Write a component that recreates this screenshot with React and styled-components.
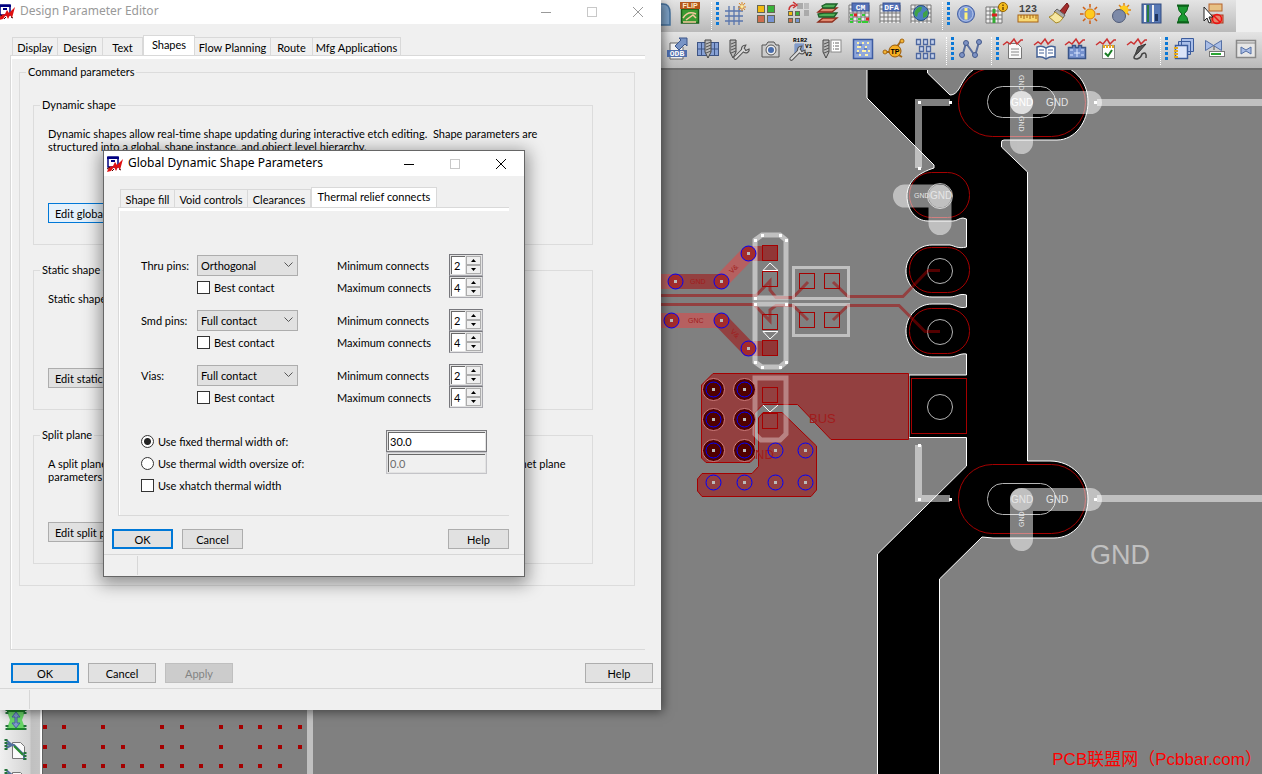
import { useState } from 'react';
import styled, { createGlobalStyle, css } from 'styled-components';

const GlobalStyle = createGlobalStyle`
  *, *::before, *::after {
    box-sizing: border-box;
  }
  body {
    margin: 0;
    overflow: hidden;
    background: #808080;
    font-family: Lato, "Liberation Sans", Arial, sans-serif;
    font-size: 11px;
    line-height: 13px;
    color: #000;
  }
  button, input, select {
    font: inherit;
    color: inherit;
    margin: 0;
  }
`

/* ---------- main application behind the dialogs ---------- */

const Desktop = styled.div`
  position: relative;
  display: flex;
  flex-direction: column;
  width: 100%;
  height: 100vh;
  overflow: hidden;
`
const Toolbars = styled.header`
  background: #efefef;
  border-bottom: 2px solid #6e6e6e;
  box-shadow: inset 0 -1px 0 #fff;
`
const ToolRow = styled.div`
  display: flex;
  align-items: flex-start;
  width: ${p => p.$short ? 'fit-content' : '100%'};
  height: ${p => p.$short ? '32px' : '36px'};
  padding: ${p => p.$short ? '2px 7px 0 643px' : '5px 0 0 661px'};
  background: linear-gradient(#e4e4e4, #cfcfcf 50%, #b9b9b9);
  overflow: hidden;
`
const ToolButton = styled.button`
  flex: none;
  display: flex;
  justify-content: center;
  width: 31px;
  height: 24px;
  padding: 0;
  border: 0;
  background: none;
  svg {
    width: 24px;
    height: 24px;
    overflow: visible;
  }
`
const Grip = styled.span`
  flex: none;
  width: 14px;
  height: 24px;
  padding-left: 6px;
  &::before {
    content: '';
    float: left;
    height: 28px;
    border-left: 1px dotted #fff;
  }
  &::after {
    content: '';
    float: right;
    width: 3px;
    height: 23px;
    background: repeating-linear-gradient(#0a78d7 0 3px, transparent 3px 5px);
  }
`
const Workspace = styled.main`
  flex: 1;
  min-height: 0;
  display: flex;
`
const SideRail = styled.nav`
  flex: none;
  display: flex;
  flex-direction: column;
  gap: 6px;
  width: 43px;
  padding-top: 638px;
  border-right: 1px solid #606060;
  background: linear-gradient(90deg, #f0f0f0, #d4d4d4 70%, #c0c0c0 75%, #c4c4c4 94%, #fff 97%);
  overflow: hidden;
`
const Board = styled.svg`
  flex: 1;
  min-width: 0;
  height: 100%;
  background: #808080;
`
const Watermark = styled.div`
  position: absolute;
  right: 0;
  bottom: 4px;
  font: 17px/20px "Liberation Sans", "Noto Sans CJK SC", sans-serif;
  color: #f00;
`

/* ---------- windows ---------- */

const Window = styled.section`
  position: absolute;
  left: ${p => p.$x}px;
  top: ${p => p.$y}px;
  width: ${p => p.$w}px;
  max-width: 100%;
  background: #f0f0f0;
  box-shadow: ${p => p.$active
    ? '0 4px 16px 3px rgba(0, 0, 0, 0.4)'
    : '2px 2px 10px rgba(0, 0, 0, 0.5)'};
  ${p => p.$active && css`
    border: 1px solid #666;
  `}
`
const TitleBar = styled.div`
  display: flex;
  align-items: center;
  height: ${p => p.$active ? '25px' : '24px'};
  padding-left: ${p => p.$active ? '3px' : '0'};
  background: #fff;
  color: ${p => p.$active ? '#000' : '#999'};
`
const AppIcon = styled.svg`
  flex: none;
  width: 16px;
  height: 16px;
  margin-left: ${p => p.$cut ? '-1px' : '0'};
`
const Title = styled.h1`
  flex: 1;
  margin: 0 0 0 5px;
  padding-bottom: 2px;
  font: 400 12px/20px "Noto Sans", "Noto Sans CJK SC", sans-serif;
`
const CaptionButton = styled.button`
  display: flex;
  align-items: center;
  justify-content: center;
  width: 46px;
  height: 22px;
  padding: 0;
  border: 0;
  background: none;
  color: ${p => p.$dim ? '#c8c8c8' : 'inherit'};
  svg {
    width: 12px;
    height: 12px;
    fill: none;
    stroke: currentColor;
    shape-rendering: ${p => p.$crisp ? 'crispEdges' : 'auto'};
  }
`
const TabStrip = styled.div`
  display: flex;
  align-items: flex-end;
  height: 20px;
  margin: ${p => p.$margin};
`
const Tab = styled.button`
  height: 18px;
  width: ${p => p.$w}px;
  padding: 2px 0 0;
  border: 1px solid #d9d9d9;
  border-width: 1px 1px 0 0;
  background: #f0f0f0;
  white-space: nowrap;
  &:first-child {
    border-left-width: 1px;
  }
  ${p => p.$on && css`
    height: 20px;
    padding: 0 0 2px;
    border-left-width: 1px;
    background: #fff;
  `}
`
const Page = styled.div`
  margin: ${p => p.$margin};
  padding: ${p => p.$padding};
  border: 1px solid #d9d9d9;
  border-right: 0;
  box-shadow: inset 1px 3px 0 #fff;
`
const ButtonRow = styled.div`
  display: flex;
  gap: 9px;
  padding: ${p => p.$padding};
  & > :last-child {
    margin-left: auto;
  }
`
const PushButton = styled.button`
  width: ${p => p.$w}px;
  height: 20px;
  padding: 0;
  border: 1px solid #adadad;
  background: #e1e1e1;
  white-space: nowrap;
  ${p => p.$default && css`
    border: 2px solid #0078d7;
  `}
  ${p => p.$hot && css`
    border-color: #0078d7;
    background: #e5f1fb;
  `}
  &:disabled {
    border-color: #bfbfbf;
    background: #ccc;
    color: #838383;
  }
`
const EditButton = styled(PushButton)`
  width: auto;
  padding: 0 6px;
`
const StatusBar = styled.div`
  display: flex;
  height: 22px;
  padding: 1px 0;
  border-top: 1px solid #d7d7d7;
  &::before {
    content: '';
    width: ${p => p.$cell}px;
    border-right: 1px solid #d7d7d7;
  }
`

/* ---------- parameter editor ---------- */

const Group = styled.fieldset`
  height: ${p => p.$h}px;
  min-width: 0;
  margin: 0 0 ${p => p.$gap || 0}px;
  padding: ${p => p.$padding};
  border: 1px solid #dcdcdc;
  legend {
    height: 14px;
    padding: 0 2px;
    margin-left: ${p => p.$legend || 0}px;
  }
`
const GroupBody = styled.div`
  display: flex;
  flex-direction: column;
  justify-content: space-between;
  align-items: flex-start;
  height: 100%;
  p {
    margin: 0;
    white-space: pre;
  }
`

/* ---------- thermal relief page ---------- */

const PinRows = styled.div`
  display: flex;
  flex-direction: column;
  gap: 11px;
`
const PinRow = styled.div`
  display: grid;
  grid-template-columns: 56px 140px 112px 34px;
  grid-template-rows: 22px 22px;
  align-items: center;
`
const Select = styled.select`
  width: 101px;
  height: 21px;
  padding: 0 3px;
  border: 1px solid #adadad;
  border-radius: 0;
  appearance: none;
  background: #e1e1e1 url("data:image/svg+xml,%3Csvg xmlns='http://www.w3.org/2000/svg' width='9' height='6'%3E%3Cpath d='M.5 .5l4 4 4-4' fill='none' stroke='%23555'/%3E%3C/svg%3E") no-repeat right 4px center;
`
const Check = styled.label`
  display: flex;
  align-items: center;
  gap: 4px;
`
const Tick = styled.input`
  width: 13px;
  height: 13px;
  border: 1px solid #333;
  border-radius: ${p => p.type === 'radio' ? '50%' : '0'};
  background: #fff;
  appearance: none;
  &:checked {
    background: radial-gradient(circle, #222 0 3px, #fff 4px);
  }
`
const Spin = styled.div`
  display: flex;
  width: 34px;
  height: 22px;
  padding: 1px;
  border: 1px solid #aaaab0;
  border-left-color: #77777c;
  border-top-color: #77777c;
  background: #e3e3e3;
`
const SpinInput = styled.input`
  width: 14px;
  min-width: 0;
  padding: 0 0 0 2px;
  border: 1px solid #696969;
  border-width: 1px 0 0 1px;
  background: #fff;
  appearance: textfield;
  &::-webkit-inner-spin-button {
    appearance: none;
    display: none;
  }
`
const SpinArrows = styled.div`
  flex: 1;
  display: flex;
  flex-direction: column;
  padding-left: 1px;
  button {
    flex: 1;
    display: flex;
    align-items: center;
    justify-content: center;
    min-height: 0;
    padding: 0;
    border: 1px solid #adadad;
    background: #f0f0f0;
  }
  svg {
    width: 5px;
    height: 3px;
  }
`
const WidthRows = styled.div`
  display: grid;
  grid-template-columns: 245px 101px;
  grid-auto-rows: 22px;
  align-items: center;
  margin-top: 22px;
`
const WidthInput = styled.input`
  width: 101px;
  height: 22px;
  padding: 0 3px;
  border: 1px solid #7a7a7e;
  background: #fff;
  box-shadow: inset 0 0 0 1px #e3e3e3, inset 2px 2px 0 #696969;
  &:disabled {
    border-color: #c4c4c8;
    background: #f0f0f0;
    color: #6d6d6d;
  }
`

/* ---------- toolbar drawings ---------- */

const grid = (x, y, w, h, s) => {
  let d = '';
  for (let i = 0; i <= w; i += s) d += `M${x + i} ${y}v${h}`;
  for (let i = 0; i <= h; i += s) d += `M${x} ${y + i}h${w}`;
  return d;
}

const Tile = ({ x, y, s = 7, c }) => (
  <rect x={x + 0.5} y={y + 0.5} width={s} height={s} fill={c} stroke="#665" />
)
const Table = ({ x = 2, y = 3, w = 20, h = 18 }) => (
  <>
    <rect x={x} y={y} width={w} height={h} fill="#eee" />
    <path d={grid(x, y, w, h, 4)} stroke="#777" fill="none" />
  </>
)
const Banner = ({ text }) => (
  <>
    <Table />
    <rect x="5" y="1" width="17" height="8" fill="#5572b8" stroke="#3a5494" />
    <text x="13.5" y="8" fontSize="8" fontWeight="700" textAnchor="middle" fill="#fff" fontFamily="Liberation Mono">{text}</text>
  </>
)
const Wave = () => (
  <path d="M0 8l4-3 3 2 4-5 3 5 4-4 2 0" fill="none" stroke="#c33" strokeWidth="1.5" />
)
const Wrench = () => (
  <>
    <path d="M3 21l9-9" stroke="#555" strokeWidth="5" strokeLinecap="round" />
    <path d="M12 13c-3-3-1-8 4-8l-2 4 2 3 4-2c1 4-4 7-8 3z" fill="#ddd" stroke="#555" strokeWidth="1.500" />
    <path d="M3 21l10-10" stroke="#ddd" strokeWidth="2.500" strokeLinecap="round" />
  </>
)
const Drill = ({ x }) => (
  <g transform={`translate(${x} 0)`}>
    <path d="M0 3h6v12l-3 6-3-6z" fill="#bbb" stroke="#444" />
    <path d="M1 7l5-2M1 10l5-2M1 13l5-2M1 16l5-2" stroke="#555" />
  </g>
)

const icons = {
  next: <path d="M1 2h15q7 0 7 9v12H0z" fill="#7ea3c8" stroke="#46719c" strokeWidth="1.5" />,
  flip: (
    <>
      <rect x="3.5" y="7" width="17" height="14" fill="#3b9a32" stroke="#185f19" strokeWidth="1.5" />
      <path d="M5 16q5-8 13-4M8 18l7-5 3 3M5 20h13" fill="none" stroke="#f7c9a0" strokeWidth="1.5" />
      <rect x="2" y="0" width="20" height="7" fill="#b4561c" />
      <text x="12" y="6" fontSize="7" fontWeight="700" textAnchor="middle" fill="#ffe9c4" fontFamily="Liberation Sans">FLIP</text>
    </>
  ),
  grid: (
    <>
      <path d="M6 4v19M11 4v19M16 4v19M2 9h18M2 14h18M2 19h18" stroke="#5976ad" strokeWidth="1.3" />
      <path d="M19 0v9M15 5h8M16 1l6 7M22 1l-6 7" stroke="#d98320" />
      <circle cx="19" cy="4.500" r="1.500" fill="#fff2a0" />
    </>
  ),
  tiles: (
    <>
      <Tile x={3} y={3} c="#f3ba10" /><Tile x={13} y={3} c="#39b33a" />
      <Tile x={3} y={13} c="#cd6c4d" /><Tile x={13} y={13} c="#7693d2" />
    </>
  ),
  tilesMove: (
    <>
      <rect x="12" y="1" width="6" height="6" fill="#aaa" /><rect x="19" y="1" width="5" height="6" fill="#bbb" />
      <rect x="19" y="8" width="5" height="6" fill="#aaa" />
      <path d="M4 8q0-5 6-5M8 0l4 3-4 3" fill="none" stroke="#c33" strokeWidth="1.500" />
      <Tile x={3} y={9} s={4} c="#f3ba10" /><Tile x={10} y={9} s={4} c="#39b33a" />
      <Tile x={3} y={16} s={4} c="#cd6c4d" /><Tile x={10} y={16} s={4} c="#7693d2" />
    </>
  ),
  layers: (
    <>
      <path d="M2 20l5-4h14l-5 4z" fill="#e08a70" stroke="#8e2d1c" strokeWidth="1.300" />
      <path d="M3 15l-1-3 6-1h13l-3 4z" fill="#4fae56" stroke="#1c5e28" strokeWidth="1.300" />
      <path d="M2 10l5-4h14l-5 4z" fill="#e08a70" stroke="#8e2d1c" strokeWidth="1.300" />
      <path d="M7 6L6 4l4-2h11l-3 4z" fill="#4fae56" stroke="#1c5e28" strokeWidth="1.300" />
    </>
  ),
  cm: (
    <>
      <Banner text="CM" />
      <path d="M3 13h3M15 13h3M3 17h3M11 17h3M3 20h3M11 20h3M15 20h6" stroke="#3c3" strokeWidth="2" />
      <path d="M7 13h3M19 17h3" stroke="#d22" strokeWidth="3" />
    </>
  ),
  dfa: <Banner text="DFA" />,
  globe: (
    <>
      <Table />
      <circle cx="12" cy="11" r="7.500" fill="#4b7fc0" stroke="#27507f" />
      <path d="M6 9q3-5 7-4l-1 4-3 2-1 4q-4-2-2-6M14 11l4-3q2 4-1 7l-3 1z" fill="#3fa347" />
    </>
  ),
  info: (
    <>
      <circle cx="12" cy="12" r="8.500" fill="#7390cf" stroke="#4661a3" />
      <circle cx="12" cy="12" r="7" fill="none" stroke="#b5c6ea" />
      <path d="M12 6v3M12 10.500v7" stroke="#fff27a" strokeWidth="3" />
    </>
  ),
  tableInfo: (
    <>
      <Table x={1} y={5} w={16} h={16} />
      <path d="M9 7v14" stroke="#3a3" strokeWidth="3" /><path d="M7 13h5" stroke="#d22" strokeWidth="3" />
      <circle cx="18" cy="5" r="4.500" fill="#f5bd1c" stroke="#936200" />
      <path d="M18 2.500v1.500M18 5v3" stroke="#704800" strokeWidth="1.500" />
    </>
  ),
  ruler: (
    <>
      <text x="12" y="10" fontSize="10" fontWeight="700" textAnchor="middle" fill="#444" fontFamily="Liberation Mono">123</text>
      <rect x="2" y="13" width="20" height="7" fill="#f7d873" stroke="#a86314" />
      <path d="M5 13v3M8 13v4M11 13v3M14 13v4M17 13v3M20 13v4" stroke="#a86314" />
    </>
  ),
  brush: (
    <>
      <path d="M13 9l7-8 2 3-5 9z" fill="#a32c2c" stroke="#6e1717" />
      <path d="M10 7l8 6-2 3-9-6z" fill="#aaa" stroke="#666" />
      <path d="M8 10l8 6q-3 5-7 5l-7-6q4-1 6-5z" fill="#f6e7a0" stroke="#a68928" />
    </>
  ),
  sun: (
    <>
      <path d="M12 2v20M2 12h20M5 5l14 14M19 5L5 19" stroke="#cf5f14" strokeWidth="1.500" />
      <circle cx="12" cy="12" r="6.500" fill="#d0d0d0" />
      <circle cx="12" cy="12" r="5" fill="#ffcb1e" stroke="#d97b0c" />
    </>
  ),
  eclipse: (
    <>
      <path d="M15 1v14M7 8h15M10 3l10 10M20 3L10 13" stroke="#dc8216" strokeWidth="1.500" />
      <circle cx="15" cy="8" r="4.500" fill="#ffcb1e" />
      <circle cx="10" cy="14" r="6.500" fill="#7d8aa8" stroke="#505b78" />
    </>
  ),
  stripes: (
    <>
      <rect x="2" y="2" width="19" height="19" fill="#5879b5" stroke="#334d80" />
      <path d="M5 3v17M13 3v17" stroke="#eee" strokeWidth="2" />
      <path d="M8 3v17" stroke="#287b3e" strokeWidth="2" /><path d="M15 12h3v7h-3z" fill="#1f3560" />
    </>
  ),
  hourglass: (
    <>
      <path d="M7 4q0 5 4 8-4 3-4 8h10q0-5-4-8 4-3 4-8z" fill="#1c9a33" stroke="#0b6119" />
      <path d="M6 3.500h12M6 20.500h12" stroke="#0b6119" strokeWidth="2" />
    </>
  ),
  cursorOff: (
    <>
      <rect x="7" y="2" width="13" height="7" fill="#e7c184" stroke="#b5632c" />
      <rect x="9" y="13" width="12" height="8" fill="#e9836c" stroke="#a83a20" />
      <circle cx="15" cy="17" r="4.500" fill="none" stroke="#e11" strokeWidth="1.500" /><path d="M12 14l6 6" stroke="#e11" strokeWidth="1.500" />
      <path d="M2 5v14l3-3 2 5 2-1-2-5h4z" fill="#fff" stroke="#222" />
    </>
  ),
  odb: (
    <>
      <path d="M5 6h9l4 4v12H5z" fill="#f2f2f2" stroke="#666" />
      <path d="M10 9l6-6-2-2h8v8l-2-2-6 6z" fill="#7894c6" stroke="#3a5589" />
      <rect x="2" y="13" width="20" height="7" fill="#4f6fae" />
      <text x="12" y="19" fontSize="8" fontWeight="700" textAnchor="middle" fill="#fff" fontFamily="Liberation Mono">ODB</text>
    </>
  ),
  board: (
    <>
      <rect x="1.500" y="5.500" width="21" height="13" fill="#86a0d4" stroke="#3d5484" />
      <path d="M5.500 5v14M18.500 5v14M1 12h22" stroke="#3d5484" />
      <Drill x={9} />
    </>
  ),
  drillWrench: (
    <>
      <Drill x={3} />
      <g transform="translate(6 4) scale(0.8)"><Wrench /></g>
    </>
  ),
  camera: (
    <>
      <path d="M4 8h4l2-3h6l2 3h3v12H4z" fill="#ccc" stroke="#555" />
      <circle cx="13" cy="13" r="5" fill="#eee" stroke="#555" /><circle cx="13" cy="13" r="3" fill="#496dac" />
    </>
  ),
  rename: (
    <>
      <path d={grid(6, 7, 9, 9, 2)} stroke="#6688c5" />
      <g transform="translate(0 5) scale(0.8)"><Wrench /></g>
      <g fontSize="6" fontWeight="700" fontFamily="Liberation Mono">
        <text x="4" y="5">R1R2</text>
        <text x="16" y="11">V1</text>
        <text x="16" y="19">V2</text>
      </g>
    </>
  ),
  legend: (
    <>
      <Drill x={3} />
      <rect x="11" y="3" width="10" height="12" fill="#fff" stroke="#888" />
      <path d="M13 6h1M15 6h4M13 9h1M15 9h4M13 12h1M15 12h4" stroke="#666" />
    </>
  ),
  matrix: (
    <>
      <rect x="2.500" y="2.500" width="19" height="19" fill="#90a8dc" stroke="#3d5ba1" strokeWidth="1.500" />
      <path d="M6 6h2M11 6h2M16 6h2M6 10h4M14 10h2M6 14h2M11 14h4M17 14h2M8 18h2M14 18h3" stroke="#fff2a8" strokeWidth="2" />
      <path d="M8 8h3M13 12h3M5 16h3" stroke="#3d5ba1" />
    </>
  ),
  testPoint: (
    <>
      <path d="M2 15h8M14 11l5-7M15 17l5 3" stroke="#a56713" strokeWidth="2" />
      <circle cx="3" cy="15" r="2" fill="#f3b434" stroke="#a56713" /><circle cx="20" cy="4" r="2" fill="#f3b434" stroke="#a56713" />
      <circle cx="13" cy="14" r="6" fill="#f6ae22" stroke="#96590b" />
      <text x="13" y="17" fontSize="7" fontWeight="700" textAnchor="middle" fontFamily="Liberation Sans">TP</text>
    </>
  ),
  pads: (
    <g fill="#c6d2ec" stroke="#4d679f" strokeWidth="1.300">
      <path d="M3.500 2.500h4v5h-4zM10.500 2.500h4v5h-4zM17.500 2.500h4v5h-4zM6.500 9.500h4v5h-4zM13.500 9.500h4v5h-4zM3.500 16.500h4v5h-4zM10.500 16.500h4v5h-4zM17.500 16.500h4v5h-4z" />
    </g>
  ),
  net: (
    <>
      <path d="M4 20l4-14 9 13 4-14" fill="none" stroke="#5a6f9e" strokeWidth="2" />
      <g fill="#7c92c4" stroke="#465b8b">
        <circle cx="4" cy="18" r="2.500" /><circle cx="8" cy="6" r="2.500" /><circle cx="17" cy="18" r="2.500" /><circle cx="21" cy="5" r="2.500" />
      </g>
    </>
  ),
  waveDoc: (
    <>
      <path d="M5.500 6.500h9l4 4v11h-13z" fill="#fafafa" stroke="#777" />
      <path d="M8 12h8M8 15h8M8 18h8" stroke="#888" /><Wave />
    </>
  ),
  waveBook: (
    <>
      <path d="M3 10q5-2 9 1 4-3 9-1v10q-5-1-9 2-4-3-9-2z" fill="#fff" stroke="#446296" strokeWidth="1.500" />
      <path d="M12 11v10M5 13h5M5 16h5M14 13h5M14 16h5" stroke="#446296" /><Wave />
    </>
  ),
  waveBox: (
    <>
      <path d="M3.500 10.500h4v-2h3v2h3v-2h3v2h4v11h-17z" fill="#7793cf" stroke="#395488" strokeWidth="1.500" />
      <path d="M5 13h3M16 13h3M5 18h3M16 18h3M12 12v8M9 16h6" stroke="#dbe6ff" /><Wave />
    </>
  ),
  waveCheck: (
    <>
      <rect x="6.500" y="8.500" width="12" height="13" fill="#fff" stroke="#888" />
      <path d="M7 9.500h12" stroke="#e8aa20" strokeWidth="3" strokeDasharray="2 1" />
      <path d="M9 16l3 3 4-6" fill="none" stroke="#177c22" strokeWidth="2" /><Wave />
    </>
  ),
  wavePlug: (
    <>
      <path d="M19 7l-8 9-3 2 3-8z" fill="#555" stroke="#333" />
      <path d="M10 16q-6 6 0 6 4-1 5-5 5-3 4 4" fill="none" stroke="#444" strokeWidth="1.500" /><Wave />
    </>
  ),
  books: (
    <>
      <path d="M9.500 1.500h12v13h-12zM6.500 4.500h12v13h-12z" fill="#a9bee8" stroke="#3c5c9d" />
      <path d="M3.500 8.500h12v13h-12z" fill="#dbe4f8" stroke="#3c5c9d" strokeWidth="1.500" />
      <path d="M2 11h4M2 14h4M2 17h4M2 20h4" stroke="#e5aa1d" strokeWidth="2" />
    </>
  ),
  gate: (
    <>
      <path d="M2.500 3.500l8 5 8-5v10l-8-5-8 5z" fill="#a9bde6" stroke="#5570a5" />
      <path d="M11 9v4" stroke="#555" /><rect x="6.500" y="14.500" width="15" height="5" fill="#fff" stroke="#777" />
      <path d="M8 17h10" stroke="#29a332" strokeWidth="2" />
    </>
  ),
  gateWindow: (
    <>
      <rect x="2.500" y="3.500" width="19" height="17" fill="#e6e6e6" stroke="#888" strokeWidth="1.500" /><path d="M3 6h18" stroke="#888" />
      <path d="M7 10l5 3 5-3v7l-5-3-5 3z" fill="#a9bde6" stroke="#5570a5" />
    </>
  ),
  stretch: (
    <>
      <path d="M3 4h18l-3 8 3 8H3l3-8z" fill="#68d566" />
      <path d="M3 3h18M3 21h18" stroke="#1d8527" strokeWidth="2" />
      <path d="M3 1v6M21 1v6M3 17v6M21 17v6" stroke="#24743a" strokeWidth="3" strokeDasharray="2 1" />
      <path d="M12 4l4 5h-3v6h3l-4 5-4-5h3V9H8z" fill="#7e97cb" stroke="#44639d" />
    </>
  ),
  route: (
    <>
      <path d="M8.500 4.500h8l4 4v12h-12z" fill="#fafafa" stroke="#777" />
      <path d="M2 6l8 1 10 10v5M2 10l6-3M2 2l6 5" fill="none" stroke="#53719f" strokeWidth="2" />
      <path d="M10 8l9 9" stroke="#268a2e" strokeWidth="2" />
      <path d="M2 1v11M21 14v9" stroke="#24743a" strokeWidth="3" strokeDasharray="2 1" />
    </>
  ),
}

const Tool = ({ name }) => (
  <ToolButton type="button" aria-label={name}>
    <svg viewBox="0 0 24 24">{icons[name]}</svg>
  </ToolButton>
)

const topGroups = [
  ['next', 'flip'],
  ['grid', 'tiles', 'tilesMove', 'layers', 'cm', 'dfa', 'globe'],
  ['info', 'tableInfo', 'ruler', 'brush', 'sun', 'eclipse', 'stripes', 'hourglass', 'cursorOff'],
]
const lowerGroups = [
  ['odb', 'board', 'drillWrench', 'camera', 'rename', 'legend', 'matrix', 'testPoint', 'pads'],
  ['net'],
  ['waveDoc', 'waveBook', 'waveBox', 'waveCheck', 'wavePlug'],
  ['books', 'gate', 'gateWindow'],
]

const ToolGroups = ({ groups }) => groups.flatMap((names, i) => [
  i > 0 && <Grip key={`grip${i}`} />,
  ...names.map(name => <Tool key={name} name={name} />),
])

/* ---------- board artwork ---------- */

const dots = [
  [725, [43, 62, 101, 160, 180, 219, 239, 258, 278, 298]],
  [745, [43, 62, 101, 121, 160, 180, 219, 258, 278, 298]],
  [764, [43, 62, 82, 101, 121, 140, 160, 180, 199, 219, 239, 258, 278]],
]
const smallVias = [[775, 450], [805, 450], [713, 482], [744, 482], [775, 482], [805, 482]]
const trackVias = [[675, 281], [721, 281], [748, 253], [671, 320], [721, 320], [748, 348]]
const bigVias = [[713, 389], [744, 389], [713, 419], [744, 419], [713, 450], [744, 450]]
const smdPads = [[762, 245], [762, 271], [762, 314], [762, 340], [799, 273], [824, 273], [799, 312], [824, 312], [762, 387], [762, 413]]
const silkDots = [
  [762, 235], [780, 235], [755, 240], [786, 240], [755, 298], [786, 304], [755, 304], [755, 362], [786, 362], [762, 367], [780, 367],
  [919, 102], [950, 102], [919, 168], [1095, 102], [919, 445], [919, 499], [950, 499], [1095, 499],
]

const Via = ({ x, y, fill }) => (
  <g>
    <circle cx={x + 0.5} cy={y + 0.5} r="7.500" fill={fill || 'none'} stroke="#00f" />
    <rect x={x - 1} y={y - 1} width="3" height="3" fill="#bbb" />
  </g>
)

const BoardArt = () => (
  <Board aria-label="Board layout">
    <g transform="translate(-43 -70)" fontFamily="Liberation Sans">
      <g fill="#a50000">
        {dots.map(([y, xs]) => xs.map(x => <rect key={`${x}-${y}`} x={x} y={y} width="4" height="4" />))}
      </g>
      <rect x="307" y="70" width="6" height="1200" fill="#c0c0c0" />

      <path
        d="M867 60V98L934 165V168C918 173 907 182 907 196C907 210 916 221 928 221H953C957 221 959 218 963 218L966.500 219V247C958 249 955 246 950 245H932C918 245 906 257 906 271S918 297 932 297H950C956 297 960 293 966.500 295V307C960 309 956 305 950 304H932C918 304 906 316 906 331S918 357 932 357H950C956 357 960 353 966.500 354V375H909V437.500H966.500V466L877.500 554V1300H939.500V579L982 537L993 538H1054C1074 538 1088 520 1088 499S1072 461 1050 461H1027.500V172L1001.500 147V143Q1001 140 1004 140H1057C1075 140 1088 122 1088 102C1088 84 1078 72 1064 66V60H980V66C960 74 962 95 950 95L927.500 73V60Z"
        stroke="#fff"
      />

      <g fill="none" stroke="#a50000">
        <rect x="958.500" y="68.500" width="127" height="68" rx="34" />
        <rect x="909.500" y="172.500" width="60" height="45" rx="22" />
        <rect x="909.500" y="247.500" width="60" height="45" rx="22" />
        <rect x="909.500" y="308.500" width="60" height="45" rx="22" />
        <rect x="958.500" y="464.500" width="127" height="69" rx="34" />
        <rect x="911.500" y="378.500" width="55" height="55" />
      </g>
      <g fill="none" stroke="#b5b5b5">
        <rect x="987.500" y="86.500" width="68" height="31" rx="15" />
        <rect x="987.500" y="483.500" width="68" height="31" rx="15" />
        <circle cx="940" cy="196" r="12.500" />
        <circle cx="940" cy="271" r="12.500" />
        <circle cx="940" cy="332" r="12.500" />
        <circle cx="940" cy="407" r="12.500" />
      </g>

      {/* clines */}
      <g fill="none" stroke="#b66060" strokeWidth="15">
        <path d="M650 281.500H675" />
        <path d="M721 281.500L748 253.500" />
        <path d="M650 320.500H721" />
      </g>
      <g fill="none" stroke="#a50000" strokeOpacity="0.5">
        <g strokeWidth="15">
          <path d="M675 281.500H721" />
          <path d="M748 253.500H778" />
          <path d="M721 320.500L748 348.500H778" />
        </g>
        <g strokeWidth="3">
          <path d="M650 295.500H756L770 281V290L776 297.500H793L808 282" />
          <path d="M833 282L848 296.500H903L928 270.500H940" />
          <path d="M650 304.500H754L770 321V310L776 305.500H793L808 320" />
          <path d="M833 320L848 305.500H899L925 331.500H940" />
        </g>
      </g>

      {/* shapes */}
      <g fill="#a50000" fillOpacity="0.5" stroke="#a50000">
        <path d="M713 373.500H908.500V439.500H831L797.500 404.500H763L754.500 413V458L750 462.500H706L701.500 458V385Z" />
        <path d="M763 412.500H782L816.500 446V490L811 496.500H702L697.500 491V479L702 473.500H752L758.500 466.500V418Z" />
      </g>
      <g fill="#a01c1c" fontSize="13">
        <text x="809" y="423">BUS</text>
        <text x="755" y="459">ND</text>
      </g>
      <g fill="#a01c1c" fontSize="7">
        <text x="690" y="284">GND</text>
        <text x="688" y="323">GNC</text>
        <text transform="translate(732 274) rotate(-45)">V&amp;</text>
        <text transform="translate(730 332) rotate(45)">V&amp;</text>
      </g>

      {/* silkscreen */}
      <g fill="none" stroke="#fff" strokeOpacity="0.5">
        <g strokeWidth="5">
          <path d="M755 240L762 235H780L786 240V298H755Z" />
          <path d="M755 304H786V362L780 367H762L755 362Z" />
        </g>
        <path d="M755 378H786V434L780 440H761L755 434Z" strokeWidth="5" strokeOpacity="0.350" />
        <g strokeWidth="3">
          <path d="M793.500 267.500H848.500V298.500H793.500Z" />
          <path d="M793.500 304.500H848.500V335.500H793.500Z" />
        </g>
        <g strokeWidth="7">
          <path d="M918.500 168V102.500H950" />
          <path d="M918.500 445V498.500H950" />
          <path d="M1097 102.500H3000" />
          <path d="M1097 498.500H3000" />
        </g>
      </g>
      {smdPads.map(([x, y]) => (
        <rect key={`${x}-${y}`} x={x + 0.5} y={y + 0.5} width="15" height="15" fill="#902020" fillOpacity={y === 245 || y === 340 ? 0.3 : 0} stroke="#a50000" />
      ))}
      <path d="M763 270.500L770 263L778 270.500ZM763 331.500H778L770 339ZM763 405L770 412L778 405" fill="none" stroke="#fff" />

      <g fill="none" stroke="#fff" strokeWidth="23" strokeLinecap="round" opacity="0.5">
        <path d="M1021.500 50V142.500M1021.500 102.500H1090.500" />
        <path d="M1021.500 500V539.500M1021.500 499.500H1090.500" />
        <path d="M904.500 196H940V223.500" strokeLinejoin="round" />
      </g>
      <g fill="#fff" fillOpacity="0.5">
        <circle cx="1021.500" cy="102.500" r="11.500" fillOpacity="0.750" />
        <circle cx="1021.500" cy="499.500" r="11.500" />
        <circle cx="940" cy="196" r="11.500" />
      </g>
      <g fill="#e6e6e6" fontSize="10">
        <text x="1011" y="106" fill="#fff">GND</text>
        <text x="1046" y="106">GND</text>
        <text x="1011" y="503">GND</text>
        <text x="1046" y="503">GND</text>
        <text x="930" y="199">GND</text>
      </g>
      <g fill="#e6e6e6" fontSize="7">
        <text transform="translate(1019 75) rotate(90)">GND</text>
        <text transform="translate(1019 116) rotate(90)">GND</text>
        <text transform="translate(1024 527) rotate(-90)">GND</text>
        <text x="914" y="198">GND</text>
      </g>
      <text x="1090" y="564" fontSize="27" fill="#c0c0c0">GND</text>

      {bigVias.map(([x, y]) => (
        <g key={`${x}-${y}`}>
          <circle cx={x + 0.5} cy={y + 0.5} r="11" fill="#500000" stroke="#d08080" />
          <Via x={x} y={y} />
        </g>
      ))}
      {smallVias.map(([x, y]) => <Via key={`${x}-${y}`} x={x} y={y} />)}
      {trackVias.map(([x, y]) => <Via key={`${x}-${y}`} x={x} y={y} fill="#a32c2c" />)}
      {silkDots.map(([x, y]) => <rect key={`${x}-${y}`} x={x - 1} y={y - 1} width="3" height="3" fill="#fff" />)}
    </g>
  </Board>
)

/* ---------- shared window parts ---------- */

const Caption = ({ title, active }) => (
  <TitleBar $active={active}>
    <AppIcon viewBox="0 0 16 16" $cut={!active} aria-hidden="true">
      <path d="M1 1h10v10H1z" fill="#fff" stroke="#000080" strokeWidth="1.500" />
      <path d="M0 2h12M4 5h4" stroke="#000080" strokeWidth="2" />
      <path d="M16 3l-3 11-2-3-2 4-2-4-3 4-4 1 2-5 4-1 2-4 2 3 3-3z" fill="#e01010" />
      <path d="M0 13l3-2M5 15l2-2M12 13l2 1" stroke="#400" />
    </AppIcon>
    <Title>{title}</Title>
    <CaptionButton type="button" aria-label="Minimize" $crisp>
      <svg viewBox="0 0 12 12"><path d="M1 6.500h10" /></svg>
    </CaptionButton>
    <CaptionButton type="button" aria-label="Maximize" $dim $crisp>
      <svg viewBox="0 0 12 12"><path d="M1.500 1.500h9v9h-9z" /></svg>
    </CaptionButton>
    <CaptionButton type="button" aria-label="Close">
      <svg viewBox="0 0 12 12"><path d="M1 1l10 10M11 1L1 11" /></svg>
    </CaptionButton>
  </TitleBar>
)

const Tabs = ({ items, selected, margin }) => (
  <TabStrip role="tablist" $margin={margin}>
    {items.map(([label, w]) => (
      <Tab key={label} type="button" role="tab" aria-selected={label === selected} $on={label === selected} $w={w}>
        {label}
      </Tab>
    ))}
  </TabStrip>
)

const editorTabs = [
  ['Display', 46], ['Design', 45], ['Text', 40], ['Shapes', 52],
  ['Flow Planning', 76], ['Route', 42], ['Mfg Applications', 88],
]

const ParameterEditor = () => (
  <Window $x={0} $y={0} $w={661} aria-label="Design Parameter Editor">
    <Caption title="Design Parameter Editor" />
    <Tabs items={editorTabs} selected="Shapes" margin="11px 12px 0" />
    <Page $margin="0 16px 0 10px" $padding="9px 10px 63px 8px">
      <Group $h={521} $legend={-7} $padding="19px 41px 0 13px">
        <legend>Command parameters</legend>
        <Group $h={147} $gap={18} $legend={-8} $padding="15px 13px 21px 14px">
          <legend>Dynamic shape</legend>
          <GroupBody>
            <p>
              {'Dynamic shapes allow real-time shape updating during interactive etch editing.  Shape parameters are\n'}
              {'structured into a global, shape instance, and object level hierarchy.'}
            </p>
            <EditButton type="button" $hot>Edit global dynamic shape parameters</EditButton>
          </GroupBody>
        </Group>
        <Group $h={147} $gap={18} $legend={-8} $padding="15px 13px 21px 14px">
          <legend>Static shape</legend>
          <GroupBody>
            <p>Static shapes</p>
            <EditButton type="button">Edit static shape parameters</EditButton>
          </GroupBody>
        </Group>
        <Group $h={136} $legend={-8} $padding="15px 13px 21px 14px">
          <legend>Split plane</legend>
          <GroupBody>
            <p>
              {'A split plane divides a layer into areas of solid copper, with anti etch lines between each and every net plane\n'}
              {'parameters control the fill.'}
            </p>
            <EditButton type="button">Edit split plane parameters</EditButton>
          </GroupBody>
        </Group>
      </Group>
    </Page>
    <ButtonRow $padding="13px 8px 5px 11px">
      <PushButton type="button" $w={68} $default>OK</PushButton>
      <PushButton type="button" $w={68}>Cancel</PushButton>
      <PushButton type="button" $w={68} disabled>Apply</PushButton>
      <PushButton type="button" $w={68}>Help</PushButton>
    </ButtonRow>
    <StatusBar $cell={30} />
  </Window>
)

const Spinner = ({ label, initial }) => {
  const [value, setValue] = useState(initial);
  return (
    <Spin>
      <SpinInput type="number" aria-label={label} value={value} onChange={e => setValue(Number(e.target.value))} />
      <SpinArrows>
        <button type="button" aria-label="Increase" onClick={() => setValue(value + 1)}>
          <svg viewBox="0 0 5 3"><path d="M0 3l2.500-3L5 3z" /></svg>
        </button>
        <button type="button" aria-label="Decrease" onClick={() => setValue(value - 1)}>
          <svg viewBox="0 0 5 3"><path d="M0 0l2.500 3L5 0z" /></svg>
        </button>
      </SpinArrows>
    </Spin>
  )
}

const pinTypes = [
  ['Thru pins:', 'Orthogonal'],
  ['Smd pins:', 'Full contact'],
  ['Vias:', 'Full contact'],
]

const shapeTabs = [
  ['Shape fill', 55], ['Void controls', 73], ['Clearances', 63], ['Thermal relief connects', 126],
]

const ShapeParameters = () => {
  const [mode, setMode] = useState('fixed');
  return (
    <Window $x={103} $y={150} $w={422} $active aria-label="Global Dynamic Shape Parameters">
      <Caption title="Global Dynamic Shape Parameters" active />
      <Tabs items={shapeTabs} selected="Thermal relief connects" margin="11px 16px 0" />
      <Page $margin="0 15px 0 14px" $padding="46px 20px 19px 22px">
        <PinRows>
          {pinTypes.map(([label, contact]) => (
            <PinRow key={label}>
              <label htmlFor={label}>{label}</label>
              <Select id={label} defaultValue={contact}>
                <option>Orthogonal</option>
                <option>Full contact</option>
              </Select>
              <span>Minimum connects</span>
              <Spinner label={`${label} minimum connects`} initial={2} />
              <span />
              <Check><Tick type="checkbox" />Best contact</Check>
              <span>Maximum connects</span>
              <Spinner label={`${label} maximum connects`} initial={4} />
            </PinRow>
          ))}
        </PinRows>
        <WidthRows>
          <Check>
            <Tick type="radio" name="width" checked={mode === 'fixed'} onChange={() => setMode('fixed')} />
            Use fixed thermal width of:
          </Check>
          <WidthInput aria-label="Fixed thermal width" defaultValue="30.0" disabled={mode !== 'fixed'} />
          <Check>
            <Tick type="radio" name="width" checked={mode === 'oversize'} onChange={() => setMode('oversize')} />
            Use thermal width oversize of:
          </Check>
          <WidthInput aria-label="Thermal width oversize" defaultValue="0.0" disabled={mode !== 'oversize'} />
          <Check><Tick type="checkbox" />Use xhatch thermal width</Check>
        </WidthRows>
      </Page>
      <ButtonRow $padding="13px 15px 5px 8px">
        <PushButton type="button" $w={61} $default>OK</PushButton>
        <PushButton type="button" $w={61}>Cancel</PushButton>
        <PushButton type="button" $w={61}>Help</PushButton>
      </ButtonRow>
      <StatusBar $cell={34} />
    </Window>
  )
}

const App = () => (
  <>
    <GlobalStyle />
    <Desktop>
      <Toolbars>
        <ToolRow $short><ToolGroups groups={topGroups} /></ToolRow>
        <ToolRow><ToolGroups groups={lowerGroups} /></ToolRow>
      </Toolbars>
      <Workspace>
        <SideRail>
          <Tool name="stretch" />
          <Tool name="route" />
          <Tool name="route" />
        </SideRail>
        <BoardArt />
      </Workspace>
      <Watermark>PCB联盟网（Pcbbar.com）</Watermark>
      <ParameterEditor />
      <ShapeParameters />
    </Desktop>
  </>
)

export default App
